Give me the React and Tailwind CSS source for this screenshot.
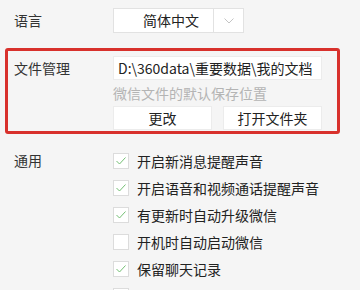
const options = [
  { label: "开启新消息提醒声音", checked: true },
  { label: "开启语音和视频通话提醒声音", checked: true },
  { label: "有更新时自动升级微信", checked: true },
  { label: "开机时自动启动微信", checked: false },
  { label: "保留聊天记录", checked: true },
  { label: "", checked: false },
];

function Checkbox({ checked }) {
  return (
    <div className="w-[16px] h-[16px] bg-white border border-[#dcdcdc] flex items-center justify-center shrink-0">
      {checked && (
        <svg width="12" height="10" viewBox="0 0 12 10" fill="none">
          <path d="M1.5 5 L4.5 8 L10.5 1.5" stroke="#74c074" strokeWidth="1" />
        </svg>
      )}
    </div>
  );
}

export default function App() {
  return (
    <div
      className="w-[360px] h-[290px] overflow-hidden bg-[#f5f5f5] text-[14px] text-[#222]"
      style={{ fontFamily: '"Noto Sans CJK SC", "Noto Sans", sans-serif' }}
    >
      {/* 语言 */}
      <div className="flex items-center pt-[8px] pl-[14px]">
        <div className="w-[99px] text-[#333]">语言</div>
        <div className="flex h-[25px] w-[131px] bg-white border border-[#e2e2e2]">
          <div className="w-[100px] flex items-center pl-[29px] border-r border-[#e2e2e2]">
            简体中文
          </div>
          <div className="flex-1 flex items-center justify-center">
            <svg width="10" height="6" viewBox="0 0 10 6" fill="none">
              <path d="M0.5 0.5 L5 5 L9.5 0.5" stroke="#c4c4c4" strokeWidth="1" />
            </svg>
          </div>
        </div>
      </div>

      {/* 文件管理 */}
      <div className="mt-[15px] ml-[5px] w-[335px] h-[86px] border-[3px] border-[#d8312c] rounded-[3px] pl-[6px] pt-[5px]">
        <div className="flex">
          <div className="w-[99px] h-[24px] flex items-center text-[#333]">文件管理</div>
          <div className="flex flex-col">
            <div className="w-[209px] h-[24px] bg-white border border-[#ececec] flex items-center pl-[4px] whitespace-nowrap overflow-hidden">
              D:\360data\重要数据\我的文档
            </div>
            <div className="h-[26px] flex items-center text-[#b4b4b4]">微信文件的默认保存位置</div>
            <div className="flex gap-[11px]">
              <button className="w-[99px] h-[24px] bg-white border border-[#ececec] text-[#222]">更改</button>
              <button className="w-[99px] h-[24px] bg-white border border-[#ececec] text-[#222]">打开文件夹</button>
            </div>
          </div>
        </div>
      </div>

      {/* 通用 */}
      <div className="flex mt-[13px] pl-[14px]">
        <div className="w-[99px] h-[27px] flex items-center text-[#333]">通用</div>
        <div className="flex flex-col">
          {options.map((o, i) => (
            <div key={i} className="h-[27px] flex items-center gap-[8px] whitespace-nowrap">
              <Checkbox checked={o.checked} />
              {o.label && <span className="pt-[2px]">{o.label}</span>}
            </div>
          ))}
        </div>
      </div>
    </div>
  );
}
